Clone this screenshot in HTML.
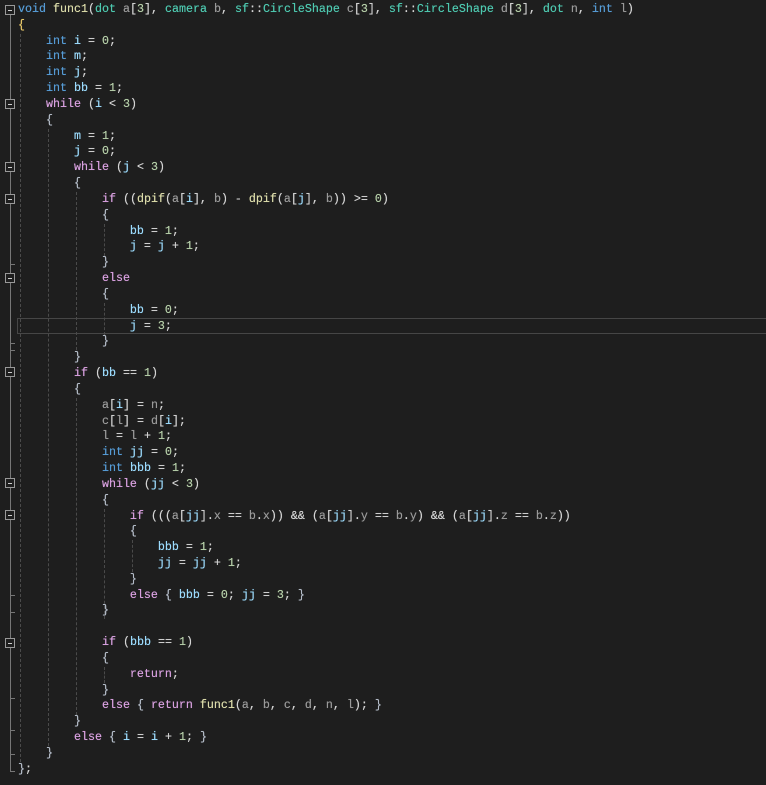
<!DOCTYPE html>
<html><head><meta charset="utf-8"><style>
html,body{margin:0;padding:0;background:#1e1e1e;width:766px;height:785px;overflow:hidden}
pre{position:absolute;left:18px;top:2px;margin:0;font-family:"Liberation Mono",monospace;font-size:11.67px;line-height:15.83px;color:#d4d4d4;text-shadow:0 0 0.4px currentColor}
.k{color:#569cd6}.c{color:#d8a0df}.v{color:#9cdcfe}.p{color:#9a9a9a}.n{color:#b5cea8}.f{color:#dcdcaa}.t{color:#4ec9b0}.y{color:#e8c86a}.b{color:#b4bcc8}
.g{position:absolute;width:0;border-left:1px dashed #4a4a4a}
.box{position:absolute;left:5px;width:8px;height:8px;border:1px solid #999;background:#1e1e1e}
.box:after{content:"";position:absolute;left:2px;top:4px;width:4px;height:1px;background:#ccc}
.bar{position:absolute;left:10px;width:1px;background:#777}
.tick{position:absolute;left:10px;width:5px;height:1px;background:#777}
.cur{position:absolute;left:17px;top:318px;width:760px;height:14px;border:1px solid #464646}
</style></head><body>
<div class="bar" style="top:10px;height:762px"></div>
<div class="tick" style="top:771px"></div>
<div class="tick" style="top:350px"></div>
<div class="tick" style="top:730px"></div>
<div class="tick" style="top:612px"></div>
<div class="tick" style="top:343px"></div>
<div class="tick" style="top:595px"></div>
<div class="tick" style="top:264px"></div>
<div class="tick" style="top:698px"></div>
<div class="tick" style="top:754px"></div>
<div class="box" style="top:5px"></div>
<div class="box" style="top:99px"></div>
<div class="box" style="top:162px"></div>
<div class="box" style="top:194px"></div>
<div class="box" style="top:273px"></div>
<div class="box" style="top:367px"></div>
<div class="box" style="top:478px"></div>
<div class="box" style="top:510px"></div>
<div class="box" style="top:638px"></div>
<div class="cur"></div>
<div class="g" style="left:20px;top:34px;height:728px"></div>
<div class="g" style="left:48px;top:129px;height:617px"></div>
<div class="g" style="left:76px;top:192px;height:158px"></div>
<div class="g" style="left:76px;top:398px;height:317px"></div>
<div class="g" style="left:104px;top:224px;height:32px"></div>
<div class="g" style="left:104px;top:303px;height:32px"></div>
<div class="g" style="left:104px;top:509px;height:110px"></div>
<div class="g" style="left:104px;top:667px;height:16px"></div>
<div class="g" style="left:132px;top:540px;height:32px"></div>
<pre><span class="k">void</span> <span class="f">func1</span>(<span class="t">dot</span> <span class="p">a</span>[<span class="n">3</span>], <span class="t">camera</span> <span class="p">b</span>, <span class="t">sf</span>::<span class="t">CircleShape</span> <span class="p">c</span>[<span class="n">3</span>], <span class="t">sf</span>::<span class="t">CircleShape</span> <span class="p">d</span>[<span class="n">3</span>], <span class="t">dot</span> <span class="p">n</span>, <span class="k">int</span> <span class="p">l</span>)
<span class="y">{</span>
    <span class="k">int</span> <span class="v">i</span> = <span class="n">0</span>;
    <span class="k">int</span> <span class="v">m</span>;
    <span class="k">int</span> <span class="v">j</span>;
    <span class="k">int</span> <span class="v">bb</span> = <span class="n">1</span>;
    <span class="c">while</span> (<span class="v">i</span> &lt; <span class="n">3</span>)
    <span class="b">{</span>
        <span class="v">m</span> = <span class="n">1</span>;
        <span class="v">j</span> = <span class="n">0</span>;
        <span class="c">while</span> (<span class="v">j</span> &lt; <span class="n">3</span>)
        <span class="b">{</span>
            <span class="c">if</span> ((<span class="f">dpif</span>(<span class="p">a</span>[<span class="v">i</span>], <span class="p">b</span>) - <span class="f">dpif</span>(<span class="p">a</span>[<span class="v">j</span>], <span class="p">b</span>)) &gt;= <span class="n">0</span>)
            <span class="b">{</span>
                <span class="v">bb</span> = <span class="n">1</span>;
                <span class="v">j</span> = <span class="v">j</span> + <span class="n">1</span>;
            <span class="b">}</span>
            <span class="c">else</span>
            <span class="b">{</span>
                <span class="v">bb</span> = <span class="n">0</span>;
                <span class="v">j</span> = <span class="n">3</span>;
            <span class="b">}</span>
        <span class="b">}</span>
        <span class="c">if</span> (<span class="v">bb</span> == <span class="n">1</span>)
        <span class="b">{</span>
            <span class="p">a</span>[<span class="v">i</span>] = <span class="p">n</span>;
            <span class="p">c</span>[<span class="p">l</span>] = <span class="p">d</span>[<span class="v">i</span>];
            <span class="p">l</span> = <span class="p">l</span> + <span class="n">1</span>;
            <span class="k">int</span> <span class="v">jj</span> = <span class="n">0</span>;
            <span class="k">int</span> <span class="v">bbb</span> = <span class="n">1</span>;
            <span class="c">while</span> (<span class="v">jj</span> &lt; <span class="n">3</span>)
            <span class="b">{</span>
                <span class="c">if</span> (((<span class="p">a</span>[<span class="v">jj</span>].<span class="p">x</span> == <span class="p">b</span>.<span class="p">x</span>)) &amp;&amp; (<span class="p">a</span>[<span class="v">jj</span>].<span class="p">y</span> == <span class="p">b</span>.<span class="p">y</span>) &amp;&amp; (<span class="p">a</span>[<span class="v">jj</span>].<span class="p">z</span> == <span class="p">b</span>.<span class="p">z</span>))
                <span class="b">{</span>
                    <span class="v">bbb</span> = <span class="n">1</span>;
                    <span class="v">jj</span> = <span class="v">jj</span> + <span class="n">1</span>;
                <span class="b">}</span>
                <span class="c">else</span> <span class="b">{</span> <span class="v">bbb</span> = <span class="n">0</span>; <span class="v">jj</span> = <span class="n">3</span>; <span class="b">}</span>
            <span class="b">}</span>

            <span class="c">if</span> (<span class="v">bbb</span> == <span class="n">1</span>)
            <span class="b">{</span>
                <span class="c">return</span>;
            <span class="b">}</span>
            <span class="c">else</span> <span class="b">{</span> <span class="c">return</span> <span class="f">func1</span>(<span class="p">a</span>, <span class="p">b</span>, <span class="p">c</span>, <span class="p">d</span>, <span class="p">n</span>, <span class="p">l</span>); <span class="b">}</span>
        <span class="b">}</span>
        <span class="c">else</span> <span class="b">{</span> <span class="v">i</span> = <span class="v">i</span> + <span class="n">1</span>; <span class="b">}</span>
    <span class="b">}</span>
<span class="b">}</span>;</pre>
</body></html>
